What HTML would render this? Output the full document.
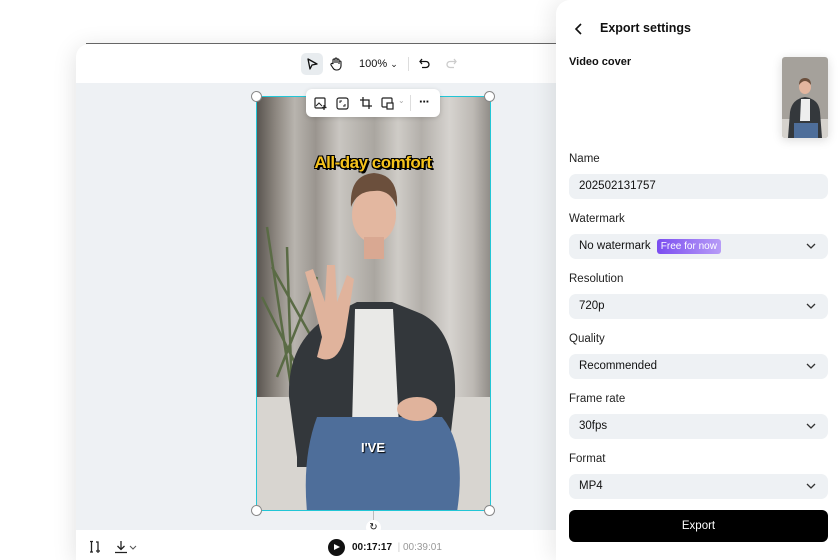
<!DOCTYPE html>
<html><head><meta charset="utf-8"><style>
*{box-sizing:border-box;margin:0;padding:0}
html,body{width:840px;height:560px;overflow:hidden}
body{background:#fff;font-family:"Liberation Sans",sans-serif;position:relative;color:#111}
.win{position:absolute;left:76px;top:44px;width:520px;height:516px;border-radius:13px 13px 0 0;background:#fff;box-shadow:0 4px 24px rgba(0,0,0,.13);overflow:hidden}
.topline{position:absolute;left:86px;top:43px;width:480px;height:1px;background:#666}
.canvas{position:absolute;left:0;top:39px;width:520px;height:447px;background:#eef1f4}
.bottom{position:absolute;left:0;top:486px;width:520px;height:30px;background:#fff}
.panel{position:absolute;left:556px;top:0;width:300px;height:560px;background:#fff;border-radius:14px 0 0 0;box-shadow:-6px 0 20px rgba(0,0,0,.08)}
.lbl{position:absolute;left:13px;font-size:11.5px;color:#222}
.fld{position:absolute;left:13px;width:259px;height:25px;background:#eef1f4;border-radius:7px;font-size:11.5px;padding-left:10px;line-height:25px;color:#111}
.chev{position:absolute;right:12px;top:8px}
.tb{position:absolute;font-size:11px}
</style></head><body>
<div class="win">
 <div class="canvas"></div>
 <div class="bottom"></div>
</div>
<div class="topline"></div>
<div style="position:absolute;left:301px;top:53px;width:22px;height:22px;background:#e8ecef;border-radius:5px"></div>
<svg style="position:absolute;left:305px;top:57px" width="14" height="14" viewBox="0 0 14 14"><path d="M3 2 L12 7 L7 8 L5 12 Z" fill="none" stroke="#111" stroke-width="1.3" stroke-linejoin="round"/></svg>
<svg style="position:absolute;left:329px;top:56px" width="15" height="15" viewBox="0 0 15 15"><path d="M4 8 V4 a1 1 0 0 1 2 0 V7 V3 a1 1 0 0 1 2 0 V7 V4 a1 1 0 0 1 2 0 V8 V6 a1 1 0 0 1 2 0 V10 a4 4 0 0 1 -4 4 H7 a4 4 0 0 1 -3 -2 L2 9 a1 1 0 0 1 2 -1z" fill="none" stroke="#111" stroke-width="1.1"/></svg>
<div class="tb" style="left:359px;top:58px">100% <span style="font-size:9px">&#8964;</span></div>
<div style="position:absolute;left:408px;top:57px;width:1px;height:14px;background:#ddd"></div>
<svg style="position:absolute;left:418px;top:57px" width="13" height="13" viewBox="0 0 13 13"><path d="M4 2 L2 4.5 L4 7 M2 4.5 H8 a3 3 0 0 1 0 6 H4" fill="none" stroke="#111" stroke-width="1.3"/></svg>
<svg style="position:absolute;left:445px;top:57px" width="13" height="13" viewBox="0 0 13 13"><path d="M9 2 L11 4.5 L9 7 M11 4.5 H5 a3 3 0 0 0 0 6 H9" fill="none" stroke="#ccc" stroke-width="1.3"/></svg>
<div style="position:absolute;left:256px;top:96px;width:235px;height:415px;border:1.5px solid #22c6d6;overflow:hidden">
<svg width="235" height="415" viewBox="0 0 235 415" preserveAspectRatio="none">
<defs><linearGradient id="cur" x1="0" x2="1"><stop offset="0" stop-color="#5a5550"/><stop offset=".08" stop-color="#8d8780"/><stop offset=".16" stop-color="#b8b4ae"/><stop offset=".25" stop-color="#9a958f"/><stop offset=".35" stop-color="#c9c6c1"/><stop offset=".5" stop-color="#aaa6a0"/><stop offset=".6" stop-color="#cfccc7"/><stop offset=".7" stop-color="#b3afaa"/><stop offset=".82" stop-color="#d6d3cf"/><stop offset=".92" stop-color="#bdb9b4"/><stop offset="1" stop-color="#8c8883"/></linearGradient></defs>
<rect width="235" height="415" fill="url(#cur)"/>
<rect x="0" y="300" width="235" height="115" fill="#d8d5d0"/>
<path d="M10 130 L40 330 M15 170 L60 250 M5 200 L45 280 M30 150 L35 300 M60 180 L20 280" stroke="#5a6b45" stroke-width="2.5" fill="none"/>
<path d="M40 360 L32 300 Q30 240 80 215 L100 205 L135 205 L160 215 Q200 230 198 300 L190 370 L40 370Z" fill="#33373b"/>
<path d="M98 212 L136 212 L142 330 L95 330Z" fill="#e9e9e7"/>
<path d="M60 320 Q45 360 50 415 H200 Q210 350 185 320Z" fill="#4e6e9a"/>
<ellipse cx="117" cy="118" rx="22" ry="28" fill="#e3b7a0"/>
<path d="M94 110 Q92 78 117 76 Q142 78 140 110 Q133 92 117 94 Q100 94 94 110Z" fill="#6b4f3c"/>
<rect x="107" y="140" width="20" height="22" fill="#d9a892"/>
<path d="M65 240 Q55 200 48 175 L56 172 L68 205 L70 168 L78 168 L80 205 L90 178 L97 182 L88 240 Q80 270 60 260Z" fill="#e0b39c"/>
<ellipse cx="160" cy="312" rx="20" ry="12" fill="#e0b39c"/>
</svg>
<div style="position:absolute;left:0;width:232px;top:56px;text-align:center;font:900 17px 'Liberation Sans',sans-serif;color:#f5c21c;letter-spacing:-.5px;text-shadow:1px 1px 0 #000,-1px 1px 0 #000,1px -1px 0 #000,-1px -1px 0 #000,2px 2px 0 #000">All-day comfort</div>
<div style="position:absolute;left:0;width:232px;top:343px;text-align:center;font:900 13px 'Liberation Sans',sans-serif;color:#fff;text-shadow:1px 1px 1px #000">I'VE</div>
</div>
<div style="position:absolute;left:251px;top:91px;width:11px;height:11px;border:1px solid #888;border-radius:50%;background:#fff"></div>
<div style="position:absolute;left:484px;top:91px;width:11px;height:11px;border:1px solid #888;border-radius:50%;background:#fff"></div>
<div style="position:absolute;left:251px;top:505px;width:11px;height:11px;border:1px solid #888;border-radius:50%;background:#fff"></div>
<div style="position:absolute;left:484px;top:505px;width:11px;height:11px;border:1px solid #888;border-radius:50%;background:#fff"></div>
<div style="position:absolute;left:373px;top:511px;width:1px;height:9px;background:#bbb"></div>
<div style="position:absolute;left:366px;top:520px;width:15px;height:15px;border-radius:50%;background:#fff;font-size:10px;text-align:center;line-height:15px">&#8635;</div>
<div style="position:absolute;left:306px;top:89px;width:134px;height:28px;background:#fff;border-radius:6px;box-shadow:0 1px 5px rgba(0,0,0,.15)">
<svg style="position:absolute;left:8px;top:8px" width="13" height="13" viewBox="0 0 13 13"><rect x="1" y="1" width="10" height="10" rx="1" fill="none" stroke="#222" stroke-width="1.2"/><path d="M2 9 L5 6 L8 9" fill="none" stroke="#222"/><path d="M10 8 V13 M8 10.5 H12.5" stroke="#222" stroke-width="1.2"/></svg>
<svg style="position:absolute;left:30px;top:8px" width="13" height="13" viewBox="0 0 13 13"><rect x="1" y="1" width="11" height="11" rx="2" fill="none" stroke="#222" stroke-width="1.2"/><path d="M4 6 V4 H6 M9 7 V9 H7" fill="none" stroke="#222"/></svg>
<svg style="position:absolute;left:53px;top:7px" width="14" height="14" viewBox="0 0 14 14"><path d="M4 1 V10 H13 M1 4 H10 V13" fill="none" stroke="#222" stroke-width="1.3"/></svg>
<svg style="position:absolute;left:75px;top:8px" width="13" height="13" viewBox="0 0 13 13"><rect x="1" y="1" width="10" height="9" rx="1" fill="none" stroke="#222" stroke-width="1.2"/><rect x="6" y="6" width="6" height="6" fill="#fff" stroke="#222" stroke-width="1.2"/></svg>
<span style="position:absolute;left:92px;top:7px;font-size:8px;color:#aaa">&#8964;</span>
<div style="position:absolute;left:104px;top:6px;width:1px;height:16px;background:#ddd"></div>
<span style="position:absolute;left:113px;top:5px;font-size:13px;font-weight:bold;letter-spacing:-1px">&middot;&middot;&middot;</span>
</div>
<svg style="position:absolute;left:88px;top:540px" width="14" height="14" viewBox="0 0 14 14"><path d="M2 1.5 H5 M3.5 1.5 V12 M2 12 H5 M8 2 H10 V10" fill="none" stroke="#222" stroke-width="1.3"/><path d="M10 9 V13 M8 11 H12" stroke="#222" stroke-width="1.2"/></svg>
<svg style="position:absolute;left:114px;top:540px" width="24" height="14" viewBox="0 0 24 14"><path d="M7 1 V9 M3.5 6 L7 9.5 L10.5 6 M1 12.5 H13" fill="none" stroke="#222" stroke-width="1.3"/><path d="M16 6 L19 9 L22 6" fill="none" stroke="#555"/></svg>
<div style="position:absolute;left:328px;top:539px;width:17px;height:17px;border-radius:50%;background:#111"></div>
<div style="position:absolute;left:334px;top:544px;width:0;height:0;border-left:6px solid #fff;border-top:3.5px solid transparent;border-bottom:3.5px solid transparent"></div>
<div style="position:absolute;left:352px;top:542px;font-size:10px;font-weight:bold">00:17:17 <span style="color:#ccc;font-weight:normal">&nbsp;|&nbsp;</span><span style="color:#999;font-weight:normal">00:39:01</span></div>
<div class="panel">
 <svg style="position:absolute;left:18px;top:22px" width="10" height="14" viewBox="0 0 10 14"><path d="M7 2 L2 7 L7 12" fill="none" stroke="#111" stroke-width="1.6"/></svg>
 <div style="position:absolute;left:44px;top:21px;font-size:12.5px;font-weight:bold">Export settings</div>
 <div style="position:absolute;left:13px;top:56px;font-size:11px;font-weight:bold">Video cover</div>
 <div style="position:absolute;left:226px;top:57px;width:46px;height:81px;border-radius:3px;overflow:hidden;box-shadow:0 2px 10px rgba(0,0,0,.15)">
  <svg width="46" height="81" viewBox="0 0 46 81"><rect width="46" height="81" fill="#a5a19b"/><rect x="0" y="62" width="46" height="19" fill="#d5d2cd"/><path d="M6 81 L8 55 Q10 42 23 40 Q37 42 38 55 L40 81Z" fill="#34383c"/><path d="M19 42 H28 L28 64 H18Z" fill="#eee"/><path d="M12 66 H36 V81 H12Z" fill="#4e6e9a"/><ellipse cx="23" cy="30" rx="6" ry="7" fill="#e2b59e"/><path d="M17 28 Q17 21 23 21 Q29 21 29 28 Q26 24 23 24 Q20 24 17 28Z" fill="#6b4f3c"/></svg>
 </div>
 <div class="lbl" style="top:153px">Name</div>
 <div class="fld" style="top:174px">202502131757</div>
 <div class="lbl" style="top:213px">Watermark</div>
 <div class="fld" style="top:234px">No watermark <span style="display:inline-block;background:linear-gradient(90deg,#7b4df0,#b79cf7);color:#fff;font-size:10px;line-height:15px;padding:0 4px;border-radius:3px;margin-left:3px">Free for now</span><svg class="chev" width="10" height="8" viewBox="0 0 10 8"><path d="M1 2 L5 6 L9 2" fill="none" stroke="#333" stroke-width="1.3"/></svg></div>
 <div class="lbl" style="top:273px">Resolution</div>
 <div class="fld" style="top:294px">720p<svg class="chev" width="10" height="8" viewBox="0 0 10 8"><path d="M1 2 L5 6 L9 2" fill="none" stroke="#333" stroke-width="1.3"/></svg></div>
 <div class="lbl" style="top:333px">Quality</div>
 <div class="fld" style="top:354px">Recommended<svg class="chev" width="10" height="8" viewBox="0 0 10 8"><path d="M1 2 L5 6 L9 2" fill="none" stroke="#333" stroke-width="1.3"/></svg></div>
 <div class="lbl" style="top:393px">Frame rate</div>
 <div class="fld" style="top:414px">30fps<svg class="chev" width="10" height="8" viewBox="0 0 10 8"><path d="M1 2 L5 6 L9 2" fill="none" stroke="#333" stroke-width="1.3"/></svg></div>
 <div class="lbl" style="top:453px">Format</div>
 <div class="fld" style="top:474px">MP4<svg class="chev" width="10" height="8" viewBox="0 0 10 8"><path d="M1 2 L5 6 L9 2" fill="none" stroke="#333" stroke-width="1.3"/></svg></div>
 <div style="position:absolute;left:13px;top:510px;width:259px;height:32px;background:#000;border-radius:6px;color:#fff;font-size:11.5px;text-align:center;line-height:32px">Export</div>
</div>
</body></html>
